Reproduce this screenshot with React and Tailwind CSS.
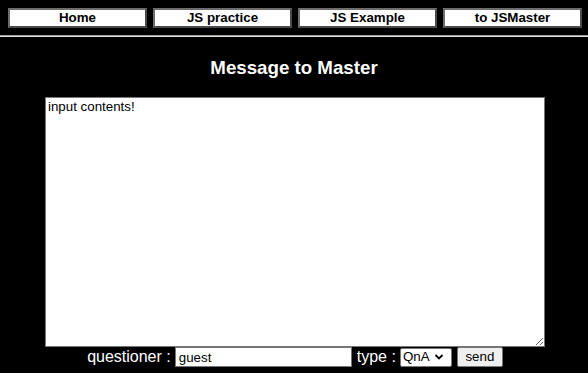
import React from 'react';

const navItems = ['Home', 'JS practice', 'JS Example', 'to JSMaster'];

export default function App() {
    return (
        <div className="min-h-[373px] w-[588px] bg-black font-['Liberation_Sans',Arial,sans-serif] text-white overflow-hidden">
            {/* Nav */}
            <div className="flex gap-[6px] pl-[8px] pt-[8px]">
                {navItems.map((item) => (
                    <div
                        key={item}
                        className="w-[139px] h-[20px] bg-white border-2 border-[#6d6d6d] border-r-[#4a4a4a] border-b-[#4a4a4a] flex items-center justify-center text-black font-bold text-[13.33px] leading-none"
                    >
                        {item}
                    </div>
                ))}
            </div>
            <div className="mt-[7px] h-[1px] bg-[#9a9a9a]" />
            <div className="h-[1px] bg-[#e0e0e0]" />

            {/* Title */}
            <h3 className="mt-[20px] text-center font-bold text-[18.72px] leading-[22px]">Message to Master</h3>

            {/* Form */}
            <div className="mt-[18px] pl-[2px] flex flex-col items-center">
                <textarea
                    defaultValue="input contents!"
                    className="w-[500px] h-[250px] bg-white text-black border border-[#767676] px-[2px] py-[1px] text-[13.33px] leading-[15px] font-['Liberation_Sans',Arial,sans-serif] resize block outline-none"
                />
                <div className="flex items-center h-[20px] text-[16px] leading-none">
                    <span className="mr-[4px]">questioner :</span>
                    <input
                        defaultValue="guest"
                        className="w-[177px] h-[20px] bg-white text-black border border-[#767676] px-[3px] text-[13.33px] font-['Liberation_Sans',Arial,sans-serif] outline-none"
                    />
                    <span className="ml-[5px] mr-[4px]">type :</span>
                    <div className="w-[52px] h-[19px] bg-white text-black border border-[#767676] rounded-[2px] flex items-center pl-[2px] text-[13.33px]">
                        <span>QnA</span>
                        <svg width="10" height="8" viewBox="0 0 10 8" className="ml-[4px]">
                            <path d="M1.5 2 L5 5.5 L8.5 2" stroke="#000" strokeWidth="1.8" fill="none" />
                        </svg>
                    </div>
                    <button className="ml-[5px] w-[46px] h-[20px] bg-[#efefef] text-black border border-[#767676] rounded-[2px] text-[13.33px] font-['Liberation_Sans',Arial,sans-serif] leading-none">
                        send
                    </button>
                </div>
            </div>
        </div>
    );
}
